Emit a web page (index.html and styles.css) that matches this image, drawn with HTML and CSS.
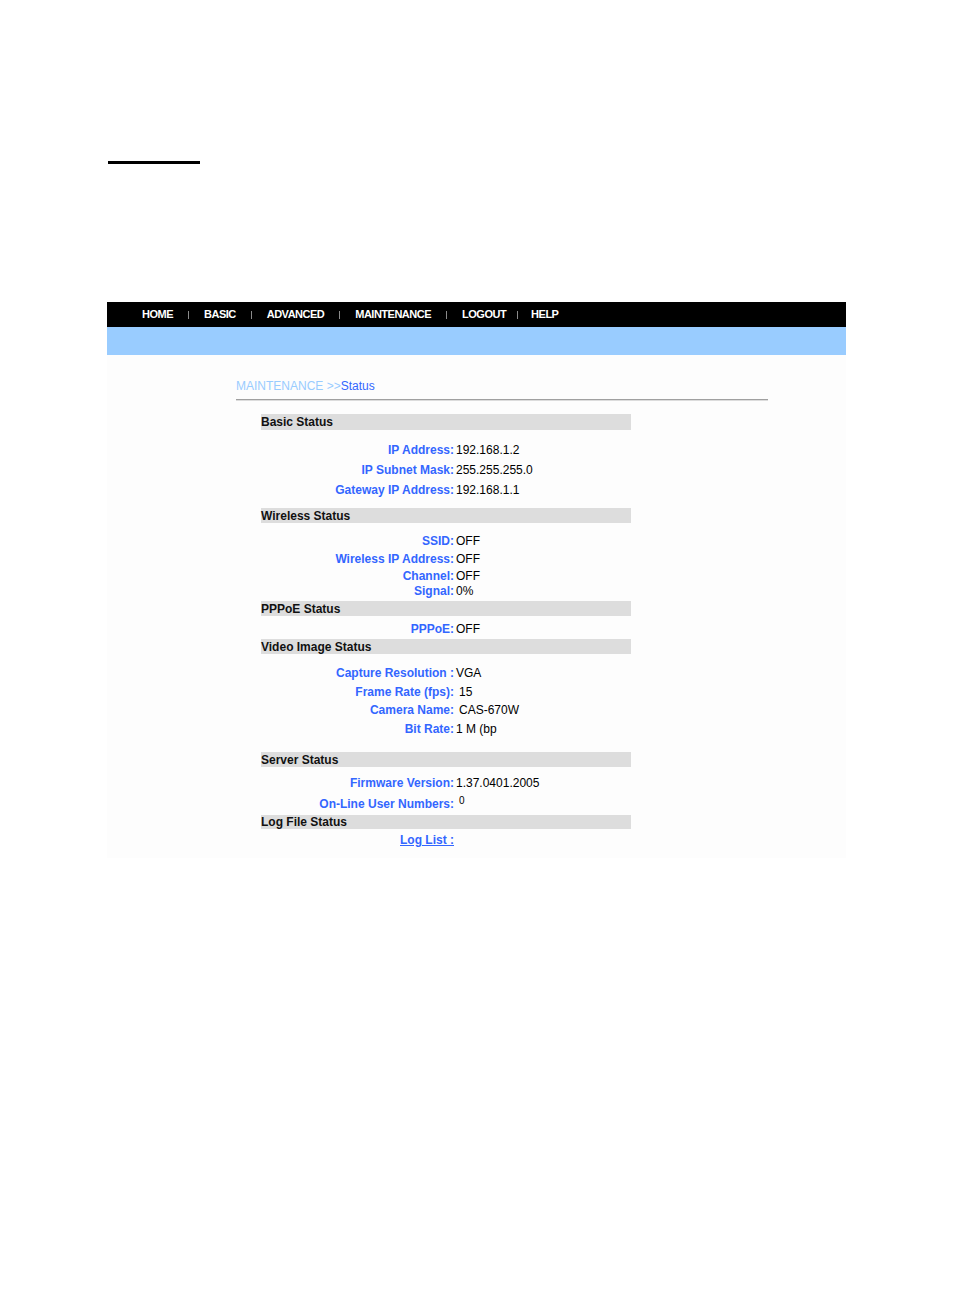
FILE: index.html
```html
<!DOCTYPE html>
<html>
<head>
<meta charset="utf-8">
<title>Status</title>
<link rel="stylesheet" href="styles.css">
</head>
<body>
<div class="page">
  <div class="rule"></div>
  <div class="frame">
    <div class="nav">
      <span class="item">HOME</span><span class="sep"></span>
      <span class="item">BASIC</span><span class="sep"></span>
      <span class="item">ADVANCED</span><span class="sep"></span>
      <span class="item">MAINTENANCE</span><span class="sep"></span>
      <span class="item">LOGOUT</span><span class="sep sep-narrow"></span>
      <span class="item">HELP</span>
    </div>
    <div class="band"></div>
    <div class="content">
      <div class="crumb"><span class="crumb-dim">MAINTENANCE &gt;&gt;</span><span class="crumb-cur">Status</span></div>
      <div class="hr"></div>
      <div class="sections">
        <div class="head h16">Basic Status</div>
        <div class="body basic">
          <div class="row h20"><span class="lab">IP Address:</span><span class="val">192.168.1.2</span></div>
          <div class="row h20"><span class="lab">IP Subnet Mask:</span><span class="val">255.255.255.0</span></div>
          <div class="row h20"><span class="lab">Gateway IP Address:</span><span class="val">192.168.1.1</span></div>
        </div>
        <div class="head h15">Wireless Status</div>
        <div class="body wireless">
          <div class="row h18"><span class="lab">SSID:</span><span class="val">OFF</span></div>
          <div class="row h18"><span class="lab">Wireless IP Address:</span><span class="val">OFF</span></div>
          <div class="row h16"><span class="lab">Channel:</span><span class="val">OFF</span></div>
          <div class="row h14"><span class="lab">Signal:</span><span class="val">0%</span></div>
        </div>
        <div class="head h15">PPPoE Status</div>
        <div class="body pppoe">
          <div class="row h14"><span class="lab">PPPoE:</span><span class="val">OFF</span></div>
        </div>
        <div class="head h15">Video Image Status</div>
        <div class="body video">
          <div class="row h19"><span class="lab">Capture Resolution :</span><span class="val">VGA</span></div>
          <div class="row h18"><span class="lab">Frame Rate (fps):</span><span class="val gap">15</span></div>
          <div class="row h19"><span class="lab">Camera Name:</span><span class="val gap">CAS-670W</span></div>
          <div class="row h18"><span class="lab">Bit Rate:</span><span class="val">1 M (bp</span></div>
        </div>
        <div class="head h15">Server Status</div>
        <div class="body server">
          <div class="row h16"><span class="lab">Firmware Version:</span><span class="val">1.37.0401.2005</span></div>
          <div class="row top"><span class="lab low">On-Line User Numbers:</span><span class="val small gap">0</span></div>
        </div>
        <div class="head h14">Log File Status</div>
        <div class="body log">
          <div class="row h14"><a class="lab link" href="#">Log List :</a></div>
        </div>
      </div>
    </div>
  </div>
</div>
</body>
</html>
```

FILE: styles.css
```css
html, body {
  margin: 0;
  padding: 0;
  background: #ffffff;
}
.page {
  padding-top: 161px;
  font-family: "Liberation Sans", Arial, sans-serif;
}
.rule {
  margin-left: 108px;
  width: 92px;
  height: 3px;
  background: #000;
}
.frame {
  margin-top: 138px;
  margin-left: 107px;
  width: 739px;
}
.nav {
  height: 25px;
  background: #000;
  display: flex;
  align-items: center;
  padding-left: 35px;
  gap: 15px;
}
.item {
  color: #fff;
  font-weight: bold;
  font-size: 11px;
  line-height: 13px;
  letter-spacing: -0.5px;
}
.sep {
  width: 1px;
  height: 8px;
  background: #8a8a8a;
}
.sep-narrow {
  margin: 0 -2px 0 -4px;
}
.band {
  height: 28px;
  background: #99ccff;
}
.content {
  background: #fdfdfd;
  height: 503px;
  padding-left: 129px;
  box-sizing: border-box;
  padding-top: 23px;
}
.crumb {
  font-size: 12px;
  line-height: 16px;
}
.crumb-dim {
  color: #99ccff;
}
.crumb-cur {
  color: #3366ff;
}
.hr {
  margin-top: 5px;
  width: 532px;
  border-top: 1px solid #a0a0a0;
  border-bottom: 1px solid #dcdcdc;
}
.sections {
  margin-top: 13px;
  margin-left: 25px;
  width: 370px;
}
.head {
  background: #dddddd;
  font-weight: bold;
  font-size: 12px;
  color: #111;
  padding-top: 1px;
  box-sizing: border-box;
}
.h14 { height: 14px; line-height: 14px; }
.h15 { height: 15px; line-height: 15px; }
.h16 { height: 16px; line-height: 16px; }
.h18 { height: 18px; line-height: 18px; }
.h19 { height: 19px; line-height: 19px; }
.h20 { height: 20px; line-height: 20px; }
.head.h14 { line-height: 13px; }
.head.h15 { line-height: 14px; }
.head.h16 { line-height: 15px; }
.basic { padding: 10px 0 8px; }
.wireless { padding: 9px 0 3px; }
.pppoe { padding: 6px 0 3px; }
.video { padding: 10px 0 14px; }
.server { padding: 8px 0 3px; }
.log { padding: 4px 0 0; }
.row {
  display: flex;
  font-size: 12px;
}
.row.top {
  align-items: flex-start;
  height: 21px;
}
.lab {
  width: 193px;
  text-align: right;
  font-weight: bold;
  color: #3366ff;
  flex: none;
}
.low {
  padding-top: 5px;
  line-height: 16px;
}
.link {
  text-decoration: underline;
}
.val {
  margin-left: 2px;
  color: #000;
}
.val.gap {
  margin-left: 5px;
}
.small {
  font-size: 10px;
  line-height: 14px;
  margin-top: 3px;
}
```
